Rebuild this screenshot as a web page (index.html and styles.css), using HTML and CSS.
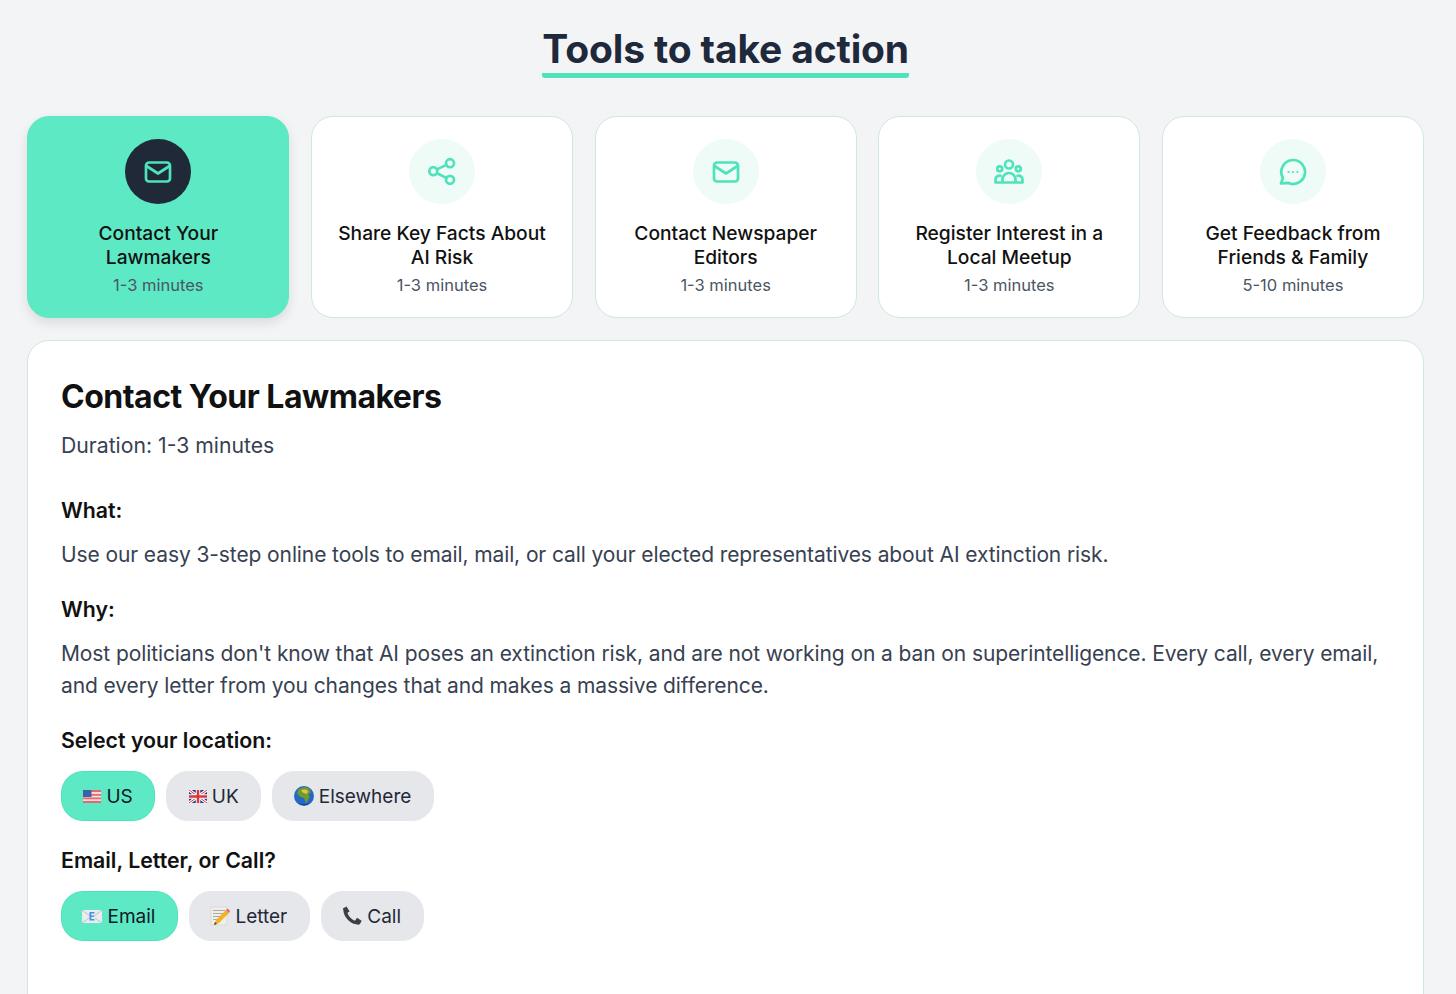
FILE: index.html
```html
<!DOCTYPE html>
<html lang="en">
<head>
<meta charset="utf-8">
<title>Tools to take action</title>
<link rel="stylesheet" href="styles.css">
</head>
<body>
<main class="page">
  <header class="head"><h1 class="title">Tools to take action</h1></header>
  <section class="cards">
    <article class="card active">
      <div class="circle"><svg class="ico" viewBox="0 0 30 30"><rect x="3" y="5.500" width="24" height="19" rx="3"/><path d="M3.500 9l11.500 7.500L26.500 9"/></svg></div>
      <h3 class="card-title">Contact Your<br>Lawmakers</h3>
      <p class="card-meta">1-3 minutes</p>
    </article>
    <article class="card">
      <div class="circle"><svg class="ico" viewBox="0 0 30 30"><circle cx="23" cy="6.200" r="4"/><circle cx="6.300" cy="14.200" r="4"/><circle cx="23" cy="22.800" r="4"/><path d="M10 12.400l9.400-4.500M10 16.200l9.400 4.700"/></svg></div>
      <h3 class="card-title">Share Key Facts About<br>AI Risk</h3>
      <p class="card-meta">1-3 minutes</p>
    </article>
    <article class="card">
      <div class="circle"><svg class="ico" viewBox="0 0 30 30"><rect x="3" y="5.500" width="24" height="19" rx="3"/><path d="M3.500 9l11.500 7.500L26.500 9"/></svg></div>
      <h3 class="card-title">Contact Newspaper<br>Editors</h3>
      <p class="card-meta">1-3 minutes</p>
    </article>
    <article class="card">
      <div class="circle"><svg class="ico" viewBox="0 0 30 30"><circle cx="15" cy="7.500" r="4"/><circle cx="5.700" cy="11.800" r="2.500"/><circle cx="24.300" cy="11.800" r="2.500"/><path d="M8.500 25.500v-3a6.500 6.500 0 0 1 13 0v3M1.500 25.500v-3a4 4 0 0 1 5-3.800M28.500 25.500v-3a4 4 0 0 0-5-3.800M1.500 25.500h27"/></svg></div>
      <h3 class="card-title">Register Interest in a<br>Local Meetup</h3>
      <p class="card-meta">1-3 minutes</p>
    </article>
    <article class="card">
      <div class="circle"><svg class="ico" viewBox="0 0 30 30"><path d="M15 3a12 12 0 1 1-5.200 22.800L3 26.500l1.900-5.500A12 12 0 0 1 15 3z"/><path class="dots" d="M10.500 15h.01M15 15h.01M19.500 15h.01"/></svg></div>
      <h3 class="card-title">Get Feedback from<br>Friends &amp; Family</h3>
      <p class="card-meta">5-10 minutes</p>
    </article>
  </section>
  <section class="panel">
    <h2 class="panel-title">Contact Your Lawmakers</h2>
    <p class="duration">Duration: 1-3 minutes</p>
    <h4 class="label first">What:</h4>
    <p class="copy">Use our easy 3-step online tools to email, mail, or call your elected representatives about AI extinction risk.</p>
    <h4 class="label">Why:</h4>
    <p class="copy">Most politicians don't know that AI poses an extinction risk, and are not working on a ban on superintelligence. Every call, every email, and every letter from you changes that and makes a massive difference.</p>
    <h4 class="label">Select your location:</h4>
    <div class="pills">
      <button class="pill on flag"><svg class="emoji" viewBox="-1 0 20 20"><rect y="4" width="18" height="13" fill="#f6dcdc"/><path d="M0 4h18v2H0zM0 8h18v1.800H0zM0 11.500h18v1.800H0zM0 15h18v2H0z" fill="#e9656f"/><rect y="4" width="8.500" height="7" fill="#3a62a8"/></svg>US</button>
      <button class="pill flag"><svg class="emoji" viewBox="-1 0 20 20"><rect y="4" width="18" height="13" fill="#27408f"/><path d="M0 4l18 13M18 4L0 17" stroke="#fff" stroke-width="3"/><path d="M0 4l18 13M18 4L0 17" stroke="#d9363e" stroke-width="1"/><path d="M9 4v13M0 10.500h18" stroke="#fff" stroke-width="4.500"/><path d="M9 4v13M0 10.500h18" stroke="#d9363e" stroke-width="2.500"/></svg>UK</button>
      <button class="pill"><svg class="emoji" viewBox="0 0 20 20"><circle cx="10" cy="10" r="10" fill="#2468c4"/><path d="M4 4c3-3 8-3.500 11.500-1.500l1.500 4-2.500 1.500 1 3.500-3.500 6-2-5.500-4.500-1.500L3 7z" fill="#6f9a2e"/><path d="M7 4.500c2.500-1.500 5.500-1 7 .5l-1 3-3.500-1z" fill="#e7c052"/><path d="M4 17a10 10 0 0 0 12 0c-3 1.500-9 1.500-12 0z" fill="#123f86"/></svg>Elsewhere</button>
    </div>
    <h4 class="label second">Email, Letter, or Call?</h4>
    <div class="pills">
      <button class="pill on"><svg class="emoji" viewBox="0 0 20 20"><rect y="4" width="20" height="13" rx="1" fill="#e9edf0"/><path d="M0 4l8 6M20 4l-8 6M0 17l7-5M20 17l-7-5" stroke="#b9c2c9" fill="none"/><path d="M7.500 6h5v1.500H9.300v2h2.800V11H9.300v2h3.200v1.500h-5z" fill="#4a90e2"/></svg>Email</button>
      <button class="pill"><svg class="emoji" viewBox="0 0 20 20"><rect x="1" y="1" width="16" height="18" fill="#f0eee8" stroke="#d0cfca" stroke-width=".6"/><path d="M3 4.500h12M3 7.500h12M3 10.500h8M3 13.500h5" stroke="#aaa9a4"/><path d="M4 19l2-5L16 4l3 3L9 17z" fill="#f0b429"/><path d="M16 4l1.500-1.500 2.500 2.500L19 7z" fill="#e0607e"/><path d="M4 19l1-3 2 2z" fill="#444"/></svg>Letter</button>
      <button class="pill"><svg class="emoji" viewBox="0 0 20 20"><path d="M3 3C3 10 9 17 17 17" fill="none" stroke="#3b4046" stroke-width="3.400"/><path d="M.8 2.500L4.600.4l3 5-3.400 2zM13 14.800l2-3 4.700 3-2 3.800z" fill="#3b4046"/></svg>Call</button>
    </div>
  </section>
</main>
</body>
</html>
```
FILE: styles.css
```css
* { box-sizing: border-box; }
html, body { margin: 0; height: 994px; overflow: hidden; }
body { background: #f3f4f6; font-family: Inter, "Liberation Sans", sans-serif; color: #111827; }
.page { padding: 0 32px 0 27.300px; display: flex; flex-direction: column; }
.head { display: flex; justify-content: center; height: 116px; padding-top: 24px; }
.title { margin: 0; height: 54px; font-size: 39px; line-height: 50px; font-weight: 700; color: #1e293b; letter-spacing: -.14px; border-bottom: 5px solid #4fe3bb; border-radius: 3px; }
.cards { display: grid; grid-template-columns: repeat(5, 1fr); gap: 21.600px; }
.card { height: 202px; background: #fff; border: 1px solid #cfe8e1; border-radius: 22px; padding: 22px 10px 0; text-align: center; }
.card.active { background: #5ee9c5; border-color: #5ee9c5; box-shadow: 0 5px 12px rgba(0,0,0,.1); }
.circle { width: 66px; height: 65px; margin: 0 auto; border-radius: 50%; background: #effbf7; display: flex; align-items: center; justify-content: center; }
.active .circle { background: #1f2937; }
.ico { width: 30px; height: 30px; fill: none; stroke: #4fe3bb; stroke-width: 2.700; stroke-linecap: round; stroke-linejoin: round; }
.dots { stroke-width: 2.200; }
.card-title { margin: 17px 0 0; font-size: 19.200px; line-height: 24px; font-weight: 500; color: #111; }
.card-meta { margin: 4px 0 0; font-size: 16.500px; line-height: 24px; color: #4b5563; }
.panel { margin-top: 22px; height: 800px; background: #fff; border: 1px solid #cfe8e1; border-radius: 22px; padding: 34px 33px 0 32.700px; }
.panel-title { margin: 0; font-size: 32px; line-height: 44px; font-weight: 700; color: #111; letter-spacing: -.5px; }
.duration { margin: 10px 0 0; font-size: 21.200px; line-height: 32px; color: #374151; }
.label { margin: 22px 0 0; font-size: 21.300px; line-height: 32px; font-weight: 600; color: #111; }
.label.first { margin-top: 33px; }
.label.second { margin-top: 23px; }
.copy { margin: 13px 0 0; font-size: 21px; line-height: 32px; letter-spacing: -.1px; color: #374151; }
.pills { display: flex; gap: 11px; margin-top: 15px; }
.pill { height: 50px; padding: 0 21.500px 0 20.500px; border: 1px solid #e5e7eb; border-radius: 22px; background: #e5e7eb; font: 400 19px/1 Inter, "Liberation Sans", sans-serif; color: #1f2937; display: flex; align-items: center; gap: 5px; }
.pill.flag { gap: 4px; }
.pill.on { background: #5ee9c5; border-color: #4fe3bb; color: #111827; }
.emoji { width: 20px; height: 20px; flex: none; }
```
